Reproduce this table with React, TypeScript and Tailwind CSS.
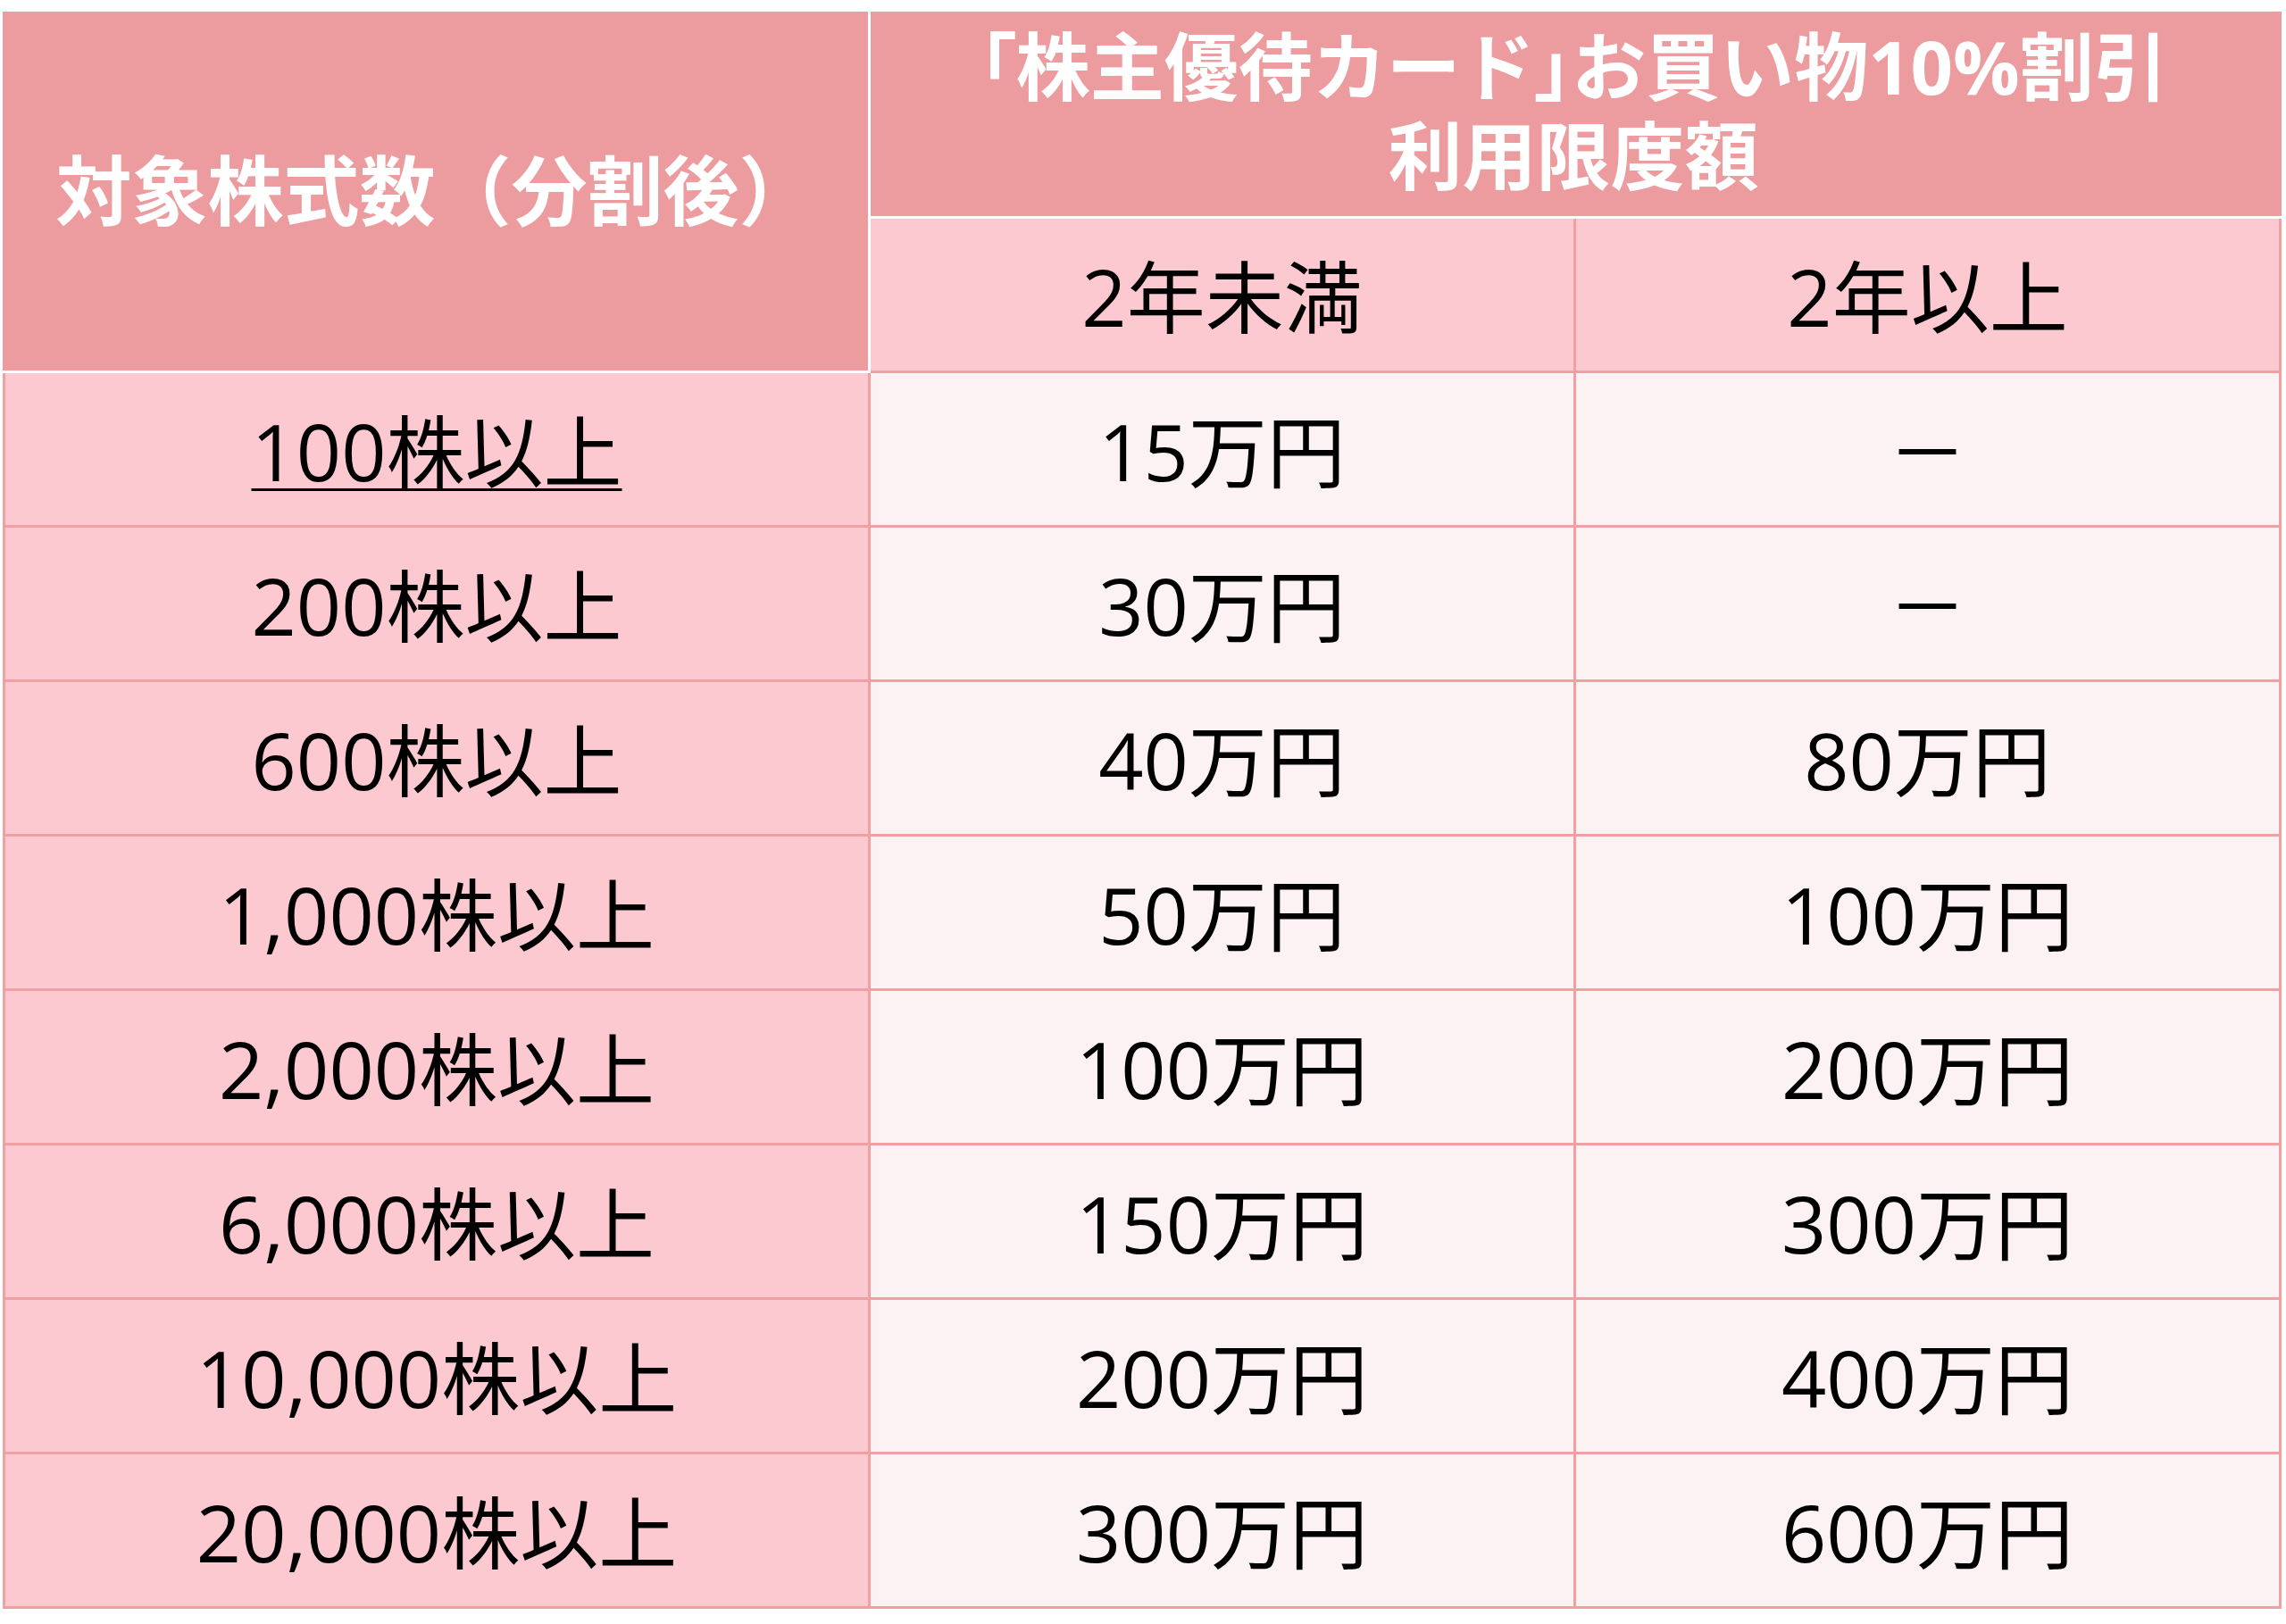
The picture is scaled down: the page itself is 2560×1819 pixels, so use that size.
const rows: { shares: string; under2: string; over2: string }[] = [
  { shares: "100株以上", under2: "15万円", over2: "－" },
  { shares: "200株以上", under2: "30万円", over2: "－" },
  { shares: "600株以上", under2: "40万円", over2: "80万円" },
  { shares: "1,000株以上", under2: "50万円", over2: "100万円" },
  { shares: "2,000株以上", under2: "100万円", over2: "200万円" },
  { shares: "6,000株以上", under2: "150万円", over2: "300万円" },
  { shares: "10,000株以上", under2: "200万円", over2: "400万円" },
  { shares: "20,000株以上", under2: "300万円", over2: "600万円" },
];

export default function App() {
  return (
    <div className="min-h-screen bg-white pt-[13px] pl-[3px] font-['Open_Sans','Noto_Sans_CJK_JP',sans-serif] text-black">
      <div className="grid w-[2552px] grid-cols-[972px_790px_790px] grid-rows-[232px_173px_repeat(8,173px)]">
        {/* header */}
        <div className="row-span-2 flex items-center justify-center border-r-[3px] border-b-[3px] border-white bg-[#ec9c9e] text-[85px] font-bold text-white">
          対象株式数（分割後）
        </div>
        <div className="col-span-2 flex flex-col items-center justify-center border-b-[3px] border-white bg-[#ec9c9e] pb-[8px] pr-[6px] text-[83px] font-bold leading-[100px] text-white">
          <span>
            <span className="[font-feature-settings:'palt']">「</span>株主優待カード
            <span className="[font-feature-settings:'palt']">」</span>お買い物10%割引
          </span>
          <span>利用限度額</span>
        </div>
        <div className="flex items-center justify-center border-r-[3px] border-b-[3px] border-[#f0a0a2] bg-[#fcc9d0] pt-[3px] text-[88px]">
          2年未満
        </div>
        <div className="flex items-center justify-center border-r-[3px] border-b-[3px] border-[#f0a0a2] bg-[#fcc9d0] pt-[3px] text-[88px]">
          2年以上
        </div>

        {/* body */}
        {rows.map((r, i) => (
          <div key={r.shares} className="contents">
            <div className="flex items-center justify-center border-x-[3px] border-b-[3px] border-[#f0a0a2] bg-[#fcc9d0] pt-[4px] text-[88px]">
              <span className={i === 0 ? "underline decoration-[3px] underline-offset-[8px]" : ""}>{r.shares}</span>
            </div>
            <div className="flex items-center justify-center border-r-[3px] border-b-[3px] border-[#f0a0a2] bg-[#fdf2f3] pt-[4px] text-[88px]">
              {r.under2}
            </div>
            <div className="flex items-center justify-center border-r-[3px] border-b-[3px] border-[#f0a0a2] bg-[#fdf2f3] pt-[4px] text-[88px]">
              {r.over2}
            </div>
          </div>
        ))}
      </div>
    </div>
  );
}
